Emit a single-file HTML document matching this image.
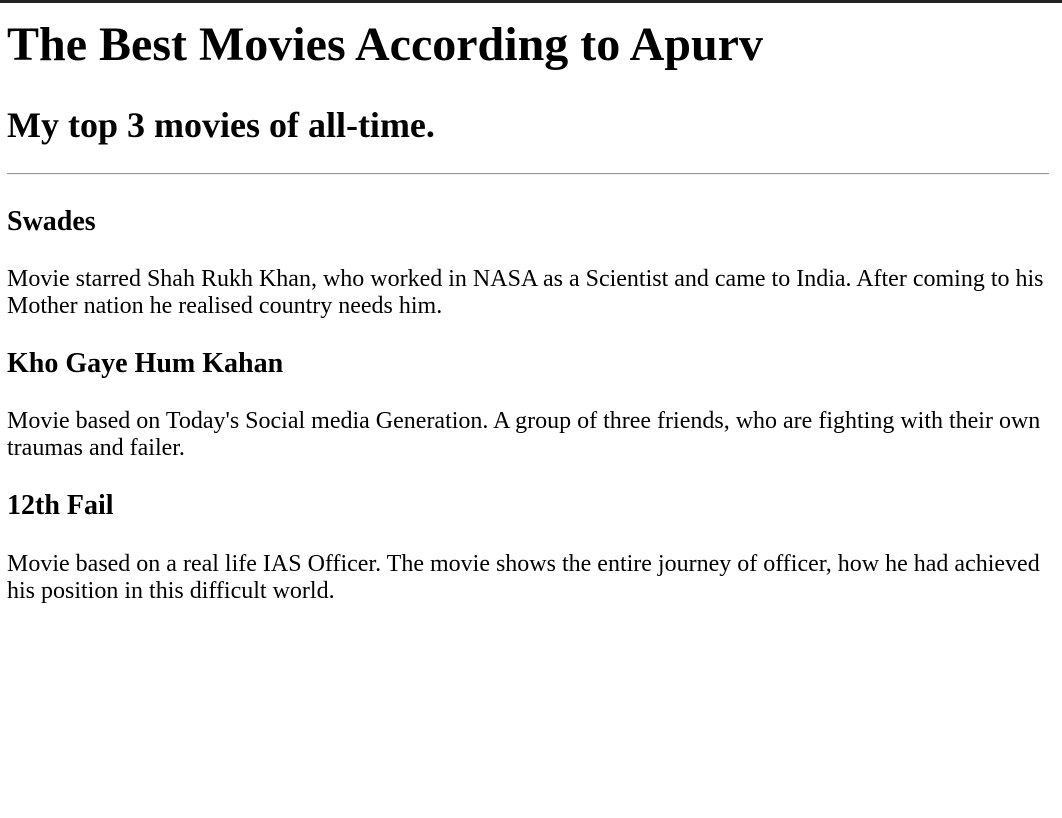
<!DOCTYPE html>
<html><head><style>
html,body{margin:0;padding:0;background:#fff;width:1062px;height:818px;overflow:hidden;position:relative;font-family:"Liberation Serif",serif;color:#000}
.bar{position:absolute;left:0;top:0;width:1062px;height:3px;background:#222}
.t{position:absolute;left:7px;white-space:nowrap}
.h1{font-size:48px;font-weight:bold;line-height:50px}
.h2{font-size:36px;font-weight:bold;line-height:40px}
.h3{font-size:28px;font-weight:bold;line-height:30px}
.p{font-size:24px;line-height:27px}
hr{position:absolute;left:7px;top:173px;width:1042px;margin:0;border:0;border-top:1px solid #999;border-bottom:1px solid #eee;height:0}
</style></head><body>
<div class="bar"></div>
<div class="t h1" style="top:20px">The Best Movies According to Apurv</div>
<div class="t h2" style="top:105px">My top 3 movies of all-time.</div>
<hr>
<div class="t h3" style="top:207px">Swades</div>
<div class="t p" style="top:266px">Movie starred Shah Rukh Khan, who worked in NASA as a Scientist and came to India. After coming to his<br>Mother nation he realised country needs him.</div>
<div class="t h3" style="top:349px">Kho Gaye Hum Kahan</div>
<div class="t p" style="top:408px">Movie based on Today's Social media Generation. A group of three friends, who are fighting with their own<br>traumas and failer.</div>
<div class="t h3" style="top:491px">12th Fail</div>
<div class="t p" style="top:551px">Movie based on a real life IAS Officer. The movie shows the entire journey of officer, how he had achieved<br>his position in this difficult world.</div>
</body></html>
